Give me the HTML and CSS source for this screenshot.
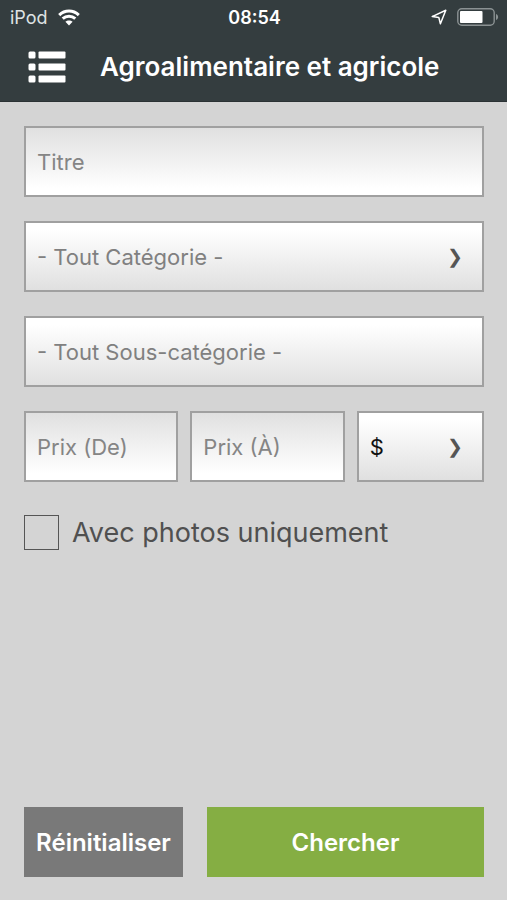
FILE: index.html
```html
<!DOCTYPE html>
<html lang="fr">
<head>
    <meta charset="UTF-8">
    <meta name="viewport" content="width=device-width, initial-scale=1.0">
    <title>Agroalimentaire et agricole</title>
    <link rel="stylesheet" href="styles.css">
</head>
<body>
    <header class="header">
        <!-- Status bar -->
        <div class="status-bar">
            <div class="carrier">
                <span>iPod</span>
                <svg width="22" height="17" viewBox="0 0 22 17" fill="none" stroke="#fff" stroke-width="3">
                    <path d="M1.2 6.1 C6.8 .7 15.2 .7 20.8 6.1"/>
                    <path d="M4.7 9.7 C8.3 6.3 13.7 6.3 17.3 9.7"/>
                    <path d="M11 16.4 L7.4 12.8 C9.4 10.9 12.6 10.9 14.6 12.8 Z" fill="#fff" stroke="none"/>
                </svg>
            </div>
            <time class="clock">08:54</time>
            <div class="indicators">
                <svg width="16" height="16" viewBox="0 0 16 16" fill="none" stroke="#fff" stroke-width="1.5" stroke-linejoin="round">
                    <path d="M1.2 7.6 L14.8 1.2 L9.4 14.8 L7.8 8.4 Z"/>
                </svg>
                <svg width="42" height="18" viewBox="0 0 42 18">
                    <rect x=".8" y=".8" width="36.4" height="16.4" rx="4" fill="none" stroke="#8b9293" stroke-width="1.4"/>
                    <rect x="3" y="3" width="22.5" height="12" rx="1" fill="#fff"/>
                    <path d="M39 6 C41.8 7 41.8 11 39 12 Z" fill="#8b9293"/>
                </svg>
            </div>
        </div>

        <!-- Title bar -->
        <div class="title-bar">
            <button class="menu-button" type="button" aria-label="Menu">
                <svg width="38" height="32" viewBox="0 0 38 32" fill="#fff">
                    <rect x=".5" y=".5" width="7" height="7" rx="1.5"/>
                    <rect x="10.5" y=".5" width="27" height="7" rx="1"/>
                    <rect x=".5" y="12.5" width="7" height="7" rx="1.5"/>
                    <rect x="10.5" y="12.5" width="27" height="7" rx="1"/>
                    <rect x=".5" y="24.5" width="7" height="7" rx="1.5"/>
                    <rect x="10.5" y="24.5" width="27" height="7" rx="1"/>
                </svg>
            </button>
            <h1>Agroalimentaire et agricole</h1>
        </div>
    </header>

    <!-- Search form -->
    <form class="search-form">
        <input class="field" type="text" name="title" placeholder="Titre" aria-label="Titre">

        <div class="select-box arrow">
            <select class="field" name="category" aria-label="Catégorie">
                <option>- Tout Catégorie -</option>
            </select>
        </div>

        <div class="select-box">
            <select class="field" name="subcategory" aria-label="Sous-catégorie">
                <option>- Tout Sous-catégorie -</option>
            </select>
        </div>

        <div class="price-row">
            <input class="field" type="text" name="price_from" placeholder="Prix (De)" aria-label="Prix (De)">
            <input class="field" type="text" name="price_to" placeholder="Prix (À)" aria-label="Prix (À)">
            <div class="select-box arrow">
                <select class="field currency" name="currency" aria-label="Devise">
                    <option>$</option>
                </select>
            </div>
        </div>

        <div class="photo-row">
            <input class="checkbox" type="checkbox" id="photos">
            <label for="photos">Avec photos uniquement</label>
        </div>

        <div class="actions">
            <button class="button reset" type="reset">Réinitialiser</button>
            <button class="button submit" type="submit">Chercher</button>
        </div>
    </form>
</body>
</html>
```
FILE: styles.css
```css
* {
    box-sizing: border-box;
}
body {
    display: flex;
    flex-direction: column;
    min-height: 100vh;
    margin: 0;
    font-family: Inter, Roboto, sans-serif;
    background-color: #d4d4d4;
}

/* Header */
.header {
    padding-bottom: 11px;
    color: #fff;
    background-color: #343d3f;
    border-bottom: 1px solid #2b3234;
}
.status-bar {
    display: grid;
    grid-template-columns: 1fr auto 1fr;
    align-items: center;
    height: 34px;
    padding: 0 8px 0 10px;
    font-size: 18px;
}
.carrier,
.indicators {
    display: flex;
    align-items: center;
    gap: 10px;
}
.carrier {
    color: #dfe3e4;
}
.indicators {
    justify-content: flex-end;
}
.clock {
    font-weight: 600;
}
.title-bar {
    display: flex;
    align-items: center;
    gap: 34px;
    height: 56px;
    padding: 10px 28px 0;
}
.title-bar h1 {
    margin: 0;
    font-size: 26px;
    font-weight: 600;
    line-height: 32px;
    white-space: nowrap;
}
.menu-button {
    display: flex;
    padding: 0;
    border: 0;
    background: none;
    cursor: pointer;
}

/* Form */
.search-form {
    display: flex;
    flex: 1;
    flex-direction: column;
    gap: 24px;
    padding: 24px 23px 23px 24px;
}
.field {
    display: block;
    width: 100%;
    min-width: 0;
    height: 71px;
    margin: 0;
    padding: 0 11px;
    font-family: inherit;
    font-size: 22px;
    color: #808080;
    border: 2px solid #a0a0a0;
    border-radius: 0;
    background: linear-gradient(#e0e0e0, #fff 90%);
    appearance: none;
}
.field::placeholder {
    color: #858585;
    opacity: 1;
}
select.field {
    background: linear-gradient(#fff 10%, #e0e0e0);
}
.select-box {
    position: relative;
}
/* Chevron drawn over the right side of the select */
.arrow::after {
    content: "❯";
    position: absolute;
    top: 0;
    right: 21px;
    font-family: "DejaVu Sans", sans-serif;
    font-size: 19px;
    line-height: 71px;
    color: #555;
    pointer-events: none;
}
.price-row {
    display: grid;
    grid-template-columns: 154fr 154fr 127fr;
    gap: 12px;
}
select.currency {
    color: #111;
}

/* Checkbox */
.photo-row {
    display: flex;
    align-items: center;
    gap: 13px;
    padding-top: 9px;
    font-size: 27px;
    line-height: 35px;
    color: #505050;
}
.checkbox {
    width: 35px;
    height: 35px;
    margin: 0;
    border: 1px solid #555;
    background: none;
    appearance: none;
}
.checkbox:checked {
    background: #85ae43;
}

/* Buttons */
.actions {
    display: grid;
    grid-template-columns: 159fr 277fr;
    gap: 24px;
    margin-top: auto;
}
.button {
    height: 70px;
    padding: 0;
    font-family: inherit;
    font-size: 24px;
    font-weight: 600;
    color: #fff;
    border: 0;
    cursor: pointer;
}
.reset {
    background-color: #797979;
}
.submit {
    background-color: #85ae43;
}
```
